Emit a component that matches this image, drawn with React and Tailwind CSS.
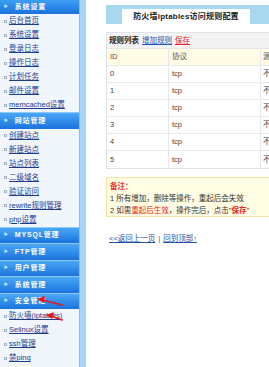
import React from "react";

const F = "font-['Liberation_Sans','Noto_Sans_CJK_SC',sans-serif]";

function Head({ label, first }) {
  return (
    <div
      className={
        first
          ? "h-[14px] flex items-center pl-[4px] bg-linear-to-b from-[#3f9ff3] to-[#1a72dc] text-white font-bold text-[7px] tracking-[0.8px]"
          : "h-[16.5px] flex items-center pl-[4px] bg-linear-to-b from-[#4aa8f6] to-[#1a72dc] border-t border-[#8cc8fa] text-white font-bold text-[7px] tracking-[0.8px]"
      }
    >
      <span className="text-[4px] mr-[6px] text-[#d6ecff]">▶</span>
      <span>{label}</span>
    </div>
  );
}

function Item({ label }) {
  return (
    <div className="h-[14px] flex items-center pl-[4px]">
      <span className="w-[3px] h-[3px] border border-[#a3b5ca] mr-[2px] shrink-0" />
      <span className="text-[7.5px] text-[#1c3c8c] underline whitespace-nowrap">{label}</span>
    </div>
  );
}

function Group({ label, items, first }) {
  return (
    <div>
      <Head label={label} first={first} />
      {items && (
        <div className="bg-[#f1f6fd]">
          {items.map((t) => (
            <Item key={t} label={t} />
          ))}
        </div>
      )}
    </div>
  );
}

const rows = ["0", "1", "2", "3", "4", "5"];

export default function App() {
  return (
    <div className={`${F} relative w-[269px] h-[367px] overflow-hidden bg-white flex`}>
      {/* Sidebar */}
      <div className="w-[86px] shrink-0 flex bg-[#a6d4fa]">
        <div className="w-[80px] flex flex-col bg-[#f1f6fd] border-r border-[#86bdec]">
          <Group
            first
            label="系统设置"
            items={["后台首页", "系统设置", "登录日志", "操作日志", "计划任务", "邮件设置", "memcached设置"]}
          />
          <Group
            label="网站管理"
            items={["创建站点", "新建站点", "站点列表", "二级域名", "验证访问", "rewrite规则管理", "php设置"]}
          />
          <Group label="MYSQL管理" />
          <Group label="FTP管理" />
          <Group label="用户管理" />
          <Group label="系统管理" />
          <Group label="安全管理" items={["防火墙(iptables)", "Selinux设置", "ssh管理", "禁ping"]} />
        </div>
      </div>

      {/* Content */}
      <div className="flex-1 overflow-hidden pl-[20px] pt-[5px]">
        <div className="h-[19px] w-[300px] bg-[#a8d8f0] flex items-end pl-[16px]">
          <div className="w-[128px] h-[15px] bg-white flex items-center justify-center text-[8px] font-bold text-[#222] tracking-[0.2px] whitespace-nowrap">
            防火墙iptables访问规则配置
          </div>
        </div>

        <div className="mt-[8px] w-[300px] border border-[#dfe3ea] text-[7.5px]">
          <div className="h-[16px] bg-[#f3f3f4] flex items-center pl-[2px] gap-[3px] border-b border-[#e3e5ea]">
            <span className="font-bold text-[#222]">规则列表</span>
            <span className="text-[#2a55b0] underline">增加规则</span>
            <span className="text-[#ee2222] underline">保存</span>
          </div>
          <div className="h-[17px] bg-[#fffce6] flex items-center border-b border-[#e6e8ee] text-[#555]">
            <div className="w-[62px] pl-[3px] border-r border-[#e6e8ee] h-full flex items-center">ID</div>
            <div className="w-[92px] pl-[3px] border-r border-[#e6e8ee] h-full flex items-center">协议</div>
            <div className="pl-[2px]">源</div>
          </div>
          {rows.map((r, i) => (
            <div
              key={r}
              className={
                i === rows.length - 1
                  ? "h-[17px] flex items-center text-[#444]"
                  : "h-[17px] flex items-center border-b border-[#e6e8ee] text-[#444]"
              }
            >
              <div className="w-[62px] pl-[3px] border-r border-[#e6e8ee] h-full flex items-center">{r}</div>
              <div className="w-[92px] pl-[3px] border-r border-[#e6e8ee] h-full flex items-center">tcp</div>
              <div className="pl-[2px]">不</div>
            </div>
          ))}
        </div>

        <div className="mt-[8px] w-[300px] h-[40px] bg-[#fffde3] border border-[#f5e3a0] pl-[3px] pt-[3px] text-[7.5px] text-[#333] leading-[12px]">
          <div className="text-[#ee3333] font-bold">备注：</div>
          <div>1 所有增加，删除等操作，重起后会失效</div>
          <div>
            2 如需<span className="text-[#ee2222]">重起后生效</span>，操作完后，点击"<span className="text-[#ee2222] font-bold">保存</span>"
          </div>
        </div>

        <div className="mt-[16px] pl-[3px] text-[7.5px] text-[#2a4fa8] whitespace-nowrap">
          <span className="underline">&lt;&lt;返回上一页</span>
          <span className="mx-[3px] text-[#555]">|</span>
          <span className="underline">回到顶部↑</span>
        </div>
      </div>

      {/* Red annotation arrows */}
      <svg className="absolute left-0 top-0 pointer-events-none" width="90" height="367" viewBox="0 0 90 367">
        <g stroke="#e8141c" strokeWidth="1.6" fill="#e8141c" strokeLinecap="round">
          <line x1="62" y1="305" x2="42" y2="300" />
          <polygon points="37,299 45,296 44,303" stroke="none" />
          <line x1="62" y1="320" x2="51" y2="316" />
          <polygon points="46,315 54,312 52,319" stroke="none" />
        </g>
      </svg>
    </div>
  );
}
